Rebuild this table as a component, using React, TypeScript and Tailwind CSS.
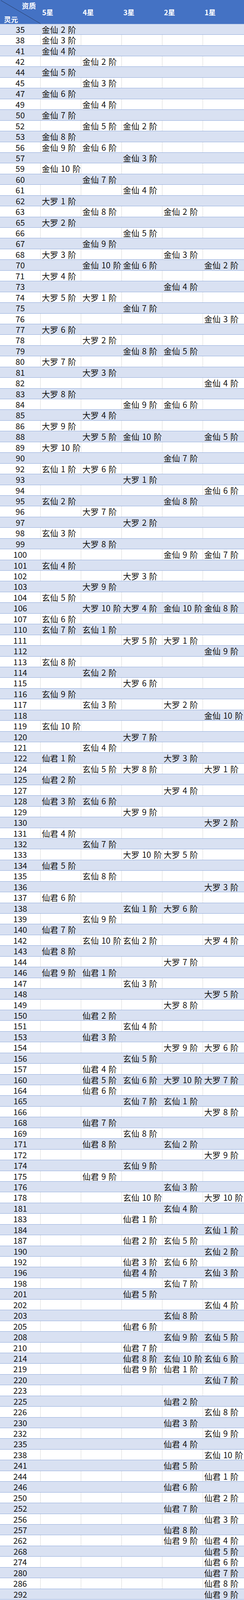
import React from 'react';

const NAMES: Record<string, string> = { 金: '金仙', 大: '大罗', 玄: '玄仙', 君: '仙君' };

// 灵元, then 5星 4星 3星 2星 1星 ("-" = empty)
const DATA = [
  '35 金2', '38 金3', '41 金4', '42 - 金2', '44 金5', '45 - 金3', '47 金6', '49 - 金4', '50 金7', '52 - 金5 金2',
  '53 金8', '56 金9 金6', '57 - - 金3', '59 金10', '60 - 金7', '61 - - 金4', '62 大1', '63 - 金8 - 金2', '65 大2',
  '66 - - 金5', '67 - 金9', '68 大3 - - 金3', '70 - 金10 金6 - 金2', '71 大4', '73 - - - 金4', '74 大5 大1',
  '75 - - 金7', '76 - - - - 金3', '77 大6', '78 - 大2', '79 - - 金8 金5', '80 大7', '81 - 大3', '82 - - - - 金4',
  '83 大8', '84 - - 金9 金6', '85 - 大4', '86 大9', '88 - 大5 金10 - 金5', '89 大10', '90 - - - 金7', '92 玄1 大6',
  '93 - - 大1', '94 - - - - 金6', '95 玄2 - - 金8', '96 - 大7', '97 - - 大2', '98 玄3', '99 - 大8',
  '100 - - - 金9 金7', '101 玄4', '102 - - 大3', '103 - 大9', '104 玄5', '106 - 大10 大4 金10 金8', '107 玄6',
  '110 玄7 玄1', '111 - - 大5 大1', '112 - - - - 金9', '113 玄8', '114 - 玄2', '115 - - 大6', '116 玄9',
  '117 - 玄3 - 大2', '118 - - - - 金10', '119 玄10', '120 - - 大7', '121 - 玄4', '122 君1 - - 大3',
  '124 - 玄5 大8 - 大1', '125 君2', '127 - - - 大4', '128 君3 玄6', '129 - - 大9', '130 - - - - 大2', '131 君4',
  '132 - 玄7', '133 - - 大10 大5', '134 君5', '135 - 玄8', '136 - - - - 大3', '137 君6', '138 - - 玄1 大6',
  '139 - 玄9', '140 君7', '142 - 玄10 玄2 - 大4', '143 君8', '144 - - - 大7', '146 君9 君1', '147 - - 玄3',
  '148 - - - - 大5', '149 - - - 大8', '150 - 君2', '151 - - 玄4', '153 - 君3', '154 - - - 大9 大6', '156 - - 玄5',
  '157 - 君4', '160 - 君5 玄6 大10 大7', '164 - 君6', '165 - - 玄7 玄1', '166 - - - - 大8', '168 - 君7',
  '169 - - 玄8', '171 - 君8 - 玄2', '172 - - - - 大9', '174 - - 玄9', '175 - 君9', '176 - - - 玄3',
  '178 - - 玄10 - 大10', '181 - - - 玄4', '183 - - 君1', '184 - - - - 玄1', '187 - - 君2 玄5', '190 - - - - 玄2',
  '192 - - 君3 玄6', '196 - - 君4 - 玄3', '198 - - - 玄7', '201 - - 君5', '202 - - - - 玄4', '203 - - - 玄8',
  '205 - - 君6', '208 - - - 玄9 玄5', '210 - - 君7', '214 - - 君8 玄10 玄6', '219 - - 君9 君1', '220 - - - - 玄7',
  '223', '225 - - - 君2', '226 - - - - 玄8', '230 - - - 君3', '232 - - - - 玄9', '235 - - - 君4', '238 - - - - 玄10',
  '241 - - - 君5', '244 - - - - 君1', '246 - - - 君6', '250 - - - - 君2', '252 - - - 君7', '256 - - - - 君3',
  '257 - - - 君8', '262 - - - 君9 君4', '268 - - - - 君5', '274 - - - - 君6', '280 - - - - 君7', '286 - - - - 君8',
  '292 - - - - 君9',
];

function label(code?: string) {
  if (!code || code === '-') return '';
  return `${NAMES[code[0]]} ${code.slice(1)} 阶`;
}

const STARS = ['5星', '4星', '3星', '2星', '1星'];

// the window is 4096px tall, so rows are 27.44px (header + 147 rows fill it)
const ROW_BLUE = 'flex h-[27.44px] border-b border-[#8EA9DB] bg-[#D9E1F2]';
const ROW_WHITE = 'flex h-[27.44px] border-b border-[#8EA9DB] bg-white';
const NUM_BLUE = 'w-[104px] shrink-0 text-center';
const NUM_WHITE = 'w-[104px] shrink-0 text-center border-r border-[#D9D9D9]';
const CELL_BLUE = 'w-[104px] shrink-0 pl-[3px] whitespace-nowrap [word-spacing:2px]';
const CELL_WHITE = 'w-[104px] shrink-0 pl-[3px] whitespace-nowrap [word-spacing:2px] border-r border-[#D9D9D9]';
const CELL_LAST = 'w-[105px] shrink-0 pl-[3px] whitespace-nowrap [word-spacing:2px]';

export default function App() {
  return (
    <div
      className="w-[625px] bg-white text-[#111] text-[21px] leading-[26px]"
      style={{ fontFamily: '"Noto Sans CJK SC", sans-serif' }}
    >
      <div className="flex h-[61.7px] bg-[#4472C4] text-white font-bold text-[18px] leading-none border-b border-[#8EA9DB]">
        <div className="relative w-[104px] shrink-0 h-full">
          <svg className="absolute inset-0 w-full h-full" viewBox="0 0 104 61" preserveAspectRatio="none">
            <line x1="2" y1="1" x2="104" y2="61" stroke="#1f2a44" strokeWidth="0.8" />
          </svg>
          <span className="absolute right-[12px] top-[5px]">资质</span>
          <span className="absolute left-[10px] bottom-[3px]">灵元</span>
        </div>
        {STARS.map((s) => (
          <div key={s} className="w-[104px] shrink-0 flex items-center pl-[4px] pt-[2px]">{s}</div>
        ))}
      </div>
      {DATA.map((line, i) => {
        const [num, ...rest] = line.split(' ');
        const blue = i % 2 === 0;
        return (
          <div key={num} className={blue ? ROW_BLUE : ROW_WHITE}>
            <div className={blue ? NUM_BLUE : NUM_WHITE}>{num}</div>
            {STARS.map((s, j) => (
              <div key={s} className={j === 4 ? CELL_LAST : blue ? CELL_BLUE : CELL_WHITE}>
                {label(rest[j])}
              </div>
            ))}
          </div>
        );
      })}
    </div>
  );
}
